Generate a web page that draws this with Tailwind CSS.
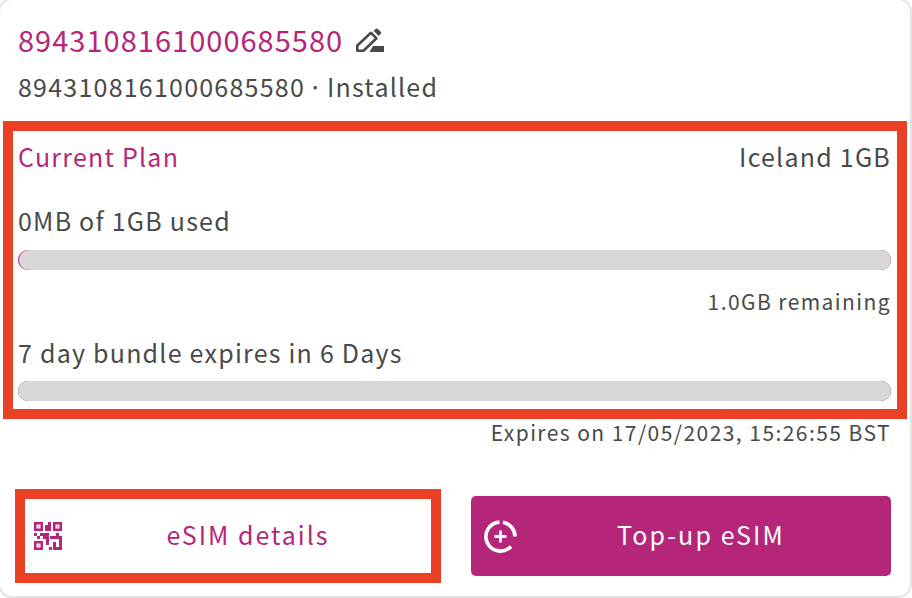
<!DOCTYPE html>
<html lang="en">
<head>
  <meta charset="UTF-8" />
  <title>eSIM</title>
  <script src="https://cdn.jsdelivr.net/npm/@tailwindcss/browser@4"></script>
</head>
<body class="bg-white">
  <div class="w-[912px] h-[598px] overflow-hidden font-['Noto_Sans_CJK_JP','Noto_Sans',sans-serif] text-[#4a4a4a]">
    <div class="w-[914px] h-[600px] ml-[-2px] mt-[-2px] bg-white border-2 border-[#e4e4e4] rounded-[14px] flex flex-col pl-[18px] pr-[19px]">

      <!-- title -->
      <div class="flex items-center gap-[13px] mt-[19px] h-[40px]">
        <h1 class="text-[29px] leading-[40px] tracking-[1.02px] text-[#b5267a]">8943108161000685580</h1>
        <svg class="w-[28px] h-[24px] mt-[2px]" viewBox="0 0 28 24" fill="none">
          <path d="M1.300 17.500 L15 4.800 L20.500 10.300 L7.500 22.700 L1.300 22.700 Z" stroke="#4a4a4a" stroke-width="2.600" stroke-linejoin="round"/>
          <path d="M17.500 2.800 L20 0.700 Q20.800 0.200 21.500 0.800 L25 4 Q25.600 4.800 25 5.500 L22.700 8 Z" fill="#4a4a4a"/>
          <path d="M13.500 24 L17 18 L28 18 L28 24 Z" fill="#4a4a4a"/>
        </svg>
      </div>
      <p class="text-[25px] leading-[34px] tracking-[1.23px] [word-spacing:-3.5px] mt-[10px]">8943108161000685580 · Installed</p>

      <!-- plan box -->
      <section class="border-[10px] border-[#ea4126] ml-[-15px] mr-[-16px] mt-[18px] h-[298px] pl-[5px] pr-[6px] flex flex-col">
        <div class="flex justify-between items-center text-[25px] leading-[34px] tracking-[1.23px] mt-[8px]">
          <span class="text-[#b5267a]">Current Plan</span>
          <span>Iceland 1GB</span>
        </div>
        <p class="text-[25px] leading-[34px] tracking-[1.23px] mt-[30px]">0MB of 1GB used</p>
        <div class="h-[20px] mt-[13px] rounded-full bg-[#b5267a] overflow-hidden pl-[1px]">
          <div class="h-full rounded-full bg-[#d8d8d8]"></div>
        </div>
        <p class="text-right text-[21px] leading-[30px] tracking-[1.43px] mt-[16px]">1.0GB remaining</p>
        <p class="text-[25px] leading-[34px] tracking-[1.23px] mt-[19px]">7 day bundle expires in 6 Days</p>
        <div class="h-[20px] mt-[12px] rounded-full bg-[#b5267a] overflow-hidden">
          <div class="h-full rounded-full bg-[#d8d8d8]"></div>
        </div>
      </section>

      <p class="text-right text-[21px] leading-[30px] tracking-[1.44px] mt-[-2px]">Expires on 17/05/2023, 15:26:55 BST</p>

      <!-- actions -->
      <div class="flex items-center justify-between mt-[42px]">
        <button class="relative ml-[-3px] w-[426px] h-[94px] border-[10px] border-[#ea4126] pl-[40px] pb-[2px] flex items-center justify-center text-[25px] tracking-[2px] text-[#b5267a] bg-white">
          <svg class="absolute left-[9px] top-[23px] w-[28px] h-[28px]" viewBox="0 0 28 28" fill="#b5267a">
            <path fill-rule="evenodd" d="M0 0h9v9H0z M2.500 2.500v4h4v-4z"/>
            <path d="M3.800 3.800h1.400v1.400H3.800z" opacity="0.6"/>
            <path fill-rule="evenodd" d="M19 0h9v9h-9z M21.500 2.500v4h4v-4z"/>
            <path d="M23 3.800h1.400v1.400H23z" opacity="0.6"/>
            <path fill-rule="evenodd" d="M0 19h9v9H0z M2.500 21.500v4h4v-4z"/>
            <path d="M3.800 22.800h1.400v1.400H3.800z" opacity="0.6"/>
            <path d="M14 0h3v3h-3z M11 3h6v6h-6z"/>
            <path d="M0 11h3v3H0z M3 14h3v3H3z M6 11h9v3H6z M9 14h3v3H9z M12 14h3v9h-3z M22 11h3v3h-3z M16 14h9v3h-9z M25 14h3v14h-3z M19 20h3v8h-3z M22 25h3v3h-3z M15 25h3v3h-3z"/>
          </svg>
          eSIM details
        </button>
        <button class="relative w-[420px] h-[80px] rounded-[5px] bg-[#b5267a] pl-[40px] pb-[2px] flex items-center justify-center text-[25px] tracking-[2.1px] text-white">
          <svg class="absolute left-[13px] top-[24px] w-[33px] h-[33px]" viewBox="0 0 33 33" fill="none" stroke="#fff">
            <path d="M27 26.500 A14.500 14.500 0 1 1 15.500 2.100 M19 2.300 A14.500 14.500 0 0 1 31 16.500" stroke-width="3.600"/>
            <path d="M16.500 10.500v12M10.500 16.500h12" stroke-width="3"/>
          </svg>
          Top-up eSIM
        </button>
      </div>
    </div>
  </div>
</body>
</html>
